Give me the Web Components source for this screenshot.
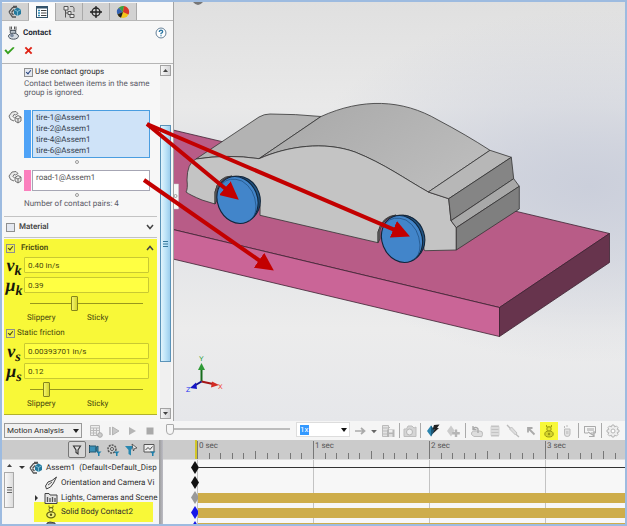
<!DOCTYPE html>
<html lang="en">
<head>
<meta charset="utf-8">
<title>Motion Study</title>
<style>
  html, body { margin: 0; height: 100%; }
  body {
    font: 8px/10px Roboto, "Liberation Sans", sans-serif;
    text-rendering: geometricPrecision;
    color: #2d2d2d;
    --blue: #9dbbe0;
    --highlight: #f8f838;
  }
</style>
</head>
<body>
<motion-app></motion-app>

<script>
const ICONS = {
  assembly: `<path d="M5 1.500H9M1 7 4.500 2.500 9 2M1 7 4.500 12H8M3.500 7.500 6 4.500M3.500 8 5.500 10" fill="none" stroke="#555" stroke-width="1.300"/><path d="M6 4.500 9.500 2.500 13 4.500V9L9.500 11 6 9Z" fill="#25799c"/><path d="M6 4.500 9.500 6.500 13 4.500M9.500 6.500V11" stroke="#9ed3e6" fill="none" stroke-width=".7"/>`,
  list: `<rect x="1.500" y="1.500" width="11" height="11" fill="#fff" stroke="#34536a"/><path d="M1 2.500H13" stroke="#34536a" stroke-width="2"/><path d="M3 5.500H5M3 8H5M3 10.500H5" stroke="#2b87b3" stroke-width="1.300"/><path d="M6 5.500H11.500M6 8H11.500M6 10.500H11.500" stroke="#444"/>`,
  config: `<path d="M2 1.500H6V5H2ZM3.500 5V12.500M3.500 8H6M6 6.500H9V9.500H6ZM8 9.500H12V12.500H8Z" fill="#eee" stroke="#555"/><path d="M8 1.500H11L12 3V7" fill="none" stroke="#666"/>`,
  target: `<circle cx="7" cy="7" r="4" fill="none" stroke="#222" stroke-width="1.300"/><path d="M7 1V13M1 7H13" stroke="#222" stroke-width="1.300"/>`,
  ball: `<circle cx="7" cy="7" r="6" fill="#f3c51c"/><path d="M7 7 3 2.500A6 6 0 0 0 1.500 9.500Z" fill="#3463b5"/><path d="M7 7 3 2.500A6 6 0 0 1 8 1Z" fill="#36a148"/><path d="M7 7 8 1A6 6 0 0 1 12.500 9.500Z" fill="#d8362d"/><path d="M7 7 1.500 9.500A6 6 0 0 0 5 12.700Z" fill="#222"/>`,
  contact: `<path d="M4 .5V4.500H10V.500M5.500 .5V3.500M8.500 .5V3.500" fill="none" stroke="#555"/><ellipse cx="7" cy="6" rx="3" ry="1.800" fill="#bcc4cc" stroke="#4a5560"/><ellipse cx="7.500" cy="10.200" rx="5" ry="3" fill="#d5dbe2" stroke="#4a5560"/><circle cx="6" cy="9.500" r="1.800" fill="#7b8ba0"/>`,
  help: `<circle cx="7" cy="7" r="5.800" fill="#fff" stroke="#4c6c86"/><path d="M5 5.700Q5 3.800 7 3.800T9 5.600Q9 6.500 7 7.500V8.500M7 9.500V10.700" fill="none" stroke="#2d78a4" stroke-width="1.500"/>`,
  ok: `<path d="M.5 7 2.500 5.500 5 8.500 11.500 2.500 13.500 3.500 5 12Z" fill="#35a01c"/>`,
  cancel: `<path d="M3 3 11 11M11 3 3 11" stroke="#df2416" stroke-width="2.400"/>`,
  parts: `<path d="M1 6 4 2 8 1.500 10 3.500 7.500 5 6 4.500 5 6.500 6.500 8M1 6 2.500 9.500 6 11M7 7.500 10 5.500 13 7V11L10 13 7 11ZM7 7.500 10 9 13 7M10 9V13" fill="#e8e8e8" stroke="#666" stroke-width=".9"/>`,
  calc: `<path d="M1.500 1.500H10.500V11.500H1.500ZM1.500 4H10.500M1.500 6.500H10M1.500 9H8M4.500 4V11.500M7.500 4V11.500" fill="#eee" stroke="#bbb"/><circle cx="11" cy="11" r="2.300" fill="#ccc" stroke="#aaa"/>`,
  stepPlay: `<path d="M3 3V11" stroke="#aaa" stroke-width="1.300"/><path d="M5.500 3 12 7 5.500 11Z" fill="#c8c8c8" stroke="#aaa" stroke-width=".8"/>`,
  play: `<path d="M4 3 11 7 4 11Z" fill="#b5b5b5"/>`,
  stop: `<rect x="3.500" y="3.500" width="7" height="7" fill="#a9a9a9"/>`,
  arrowRight: `<path d="M2 7H11M8 4 11.500 7 8 10" fill="none" stroke="#aaa" stroke-width="1.700"/>`,
  caret: `<path d="M3 5.500H11L7 10Z" fill="#666"/>`,
  film: `<path d="M1.500 1.500H7.500V12.500H1.500ZM1.500 4H7M1.500 7H7M1.500 10H7M7.500 3.500H9" fill="#e2e2e2" stroke="#bbb"/><rect x="6" y="5.500" width="7.500" height="7.500" fill="#b5b5b5"/><rect x="8" y="6" width="3.500" height="2.500" fill="#eee"/><rect x="8" y="10" width="3.500" height="3" fill="#ddd"/>`,
  camera: `<path d="M1 5H3.500L5 2H9L11 4 13 3V12.500H1Z" fill="#d5d5d5" stroke="#bdbdbd"/><circle cx="6.500" cy="8" r="3" fill="#eee" stroke="#b5b5b5"/>`,
  keyBlue: `<path d="M1 7 5 1.500 8.500 6.500 5 12.500Z" fill="#2a84ae"/><path d="M5 1.500 8.500 6.500 5 12.500Z" fill="#1b5878"/><path d="M8 1 13.500 .5 11 4H13L6.500 10 8.500 5.500H6.500Z" fill="#222"/>`,
  keyAdd: `<path d="M1 7 5 1.500 8.500 6.500 5 12.500Z" fill="#ccc"/><path d="M10 5.500V13M6.200 9.300H13.800" stroke="#b5b5b5" stroke-width="2.400"/>`,
  motor: `<path d="M1.500 10.500Q1 7 5 7H10Q13 7 12.500 10.500T10 12.500H4T1.500 10.500Z" fill="#ddd" stroke="#bbb"/><path d="M8 9V5Q6 2 3.500 4.500M3 2V5.500H6.500" fill="none" stroke="#aaa" stroke-width="1.400"/>`,
  motorTree: `<path d="M3 2 6 1 11 2V12H3Z" fill="#777" stroke="#444"/>`,
  spring: `<path d="M3 2.500H11M3 5.500H11M3 8.500H11M3 11.500H11" stroke="#c3c3c3" stroke-width="1.800"/><path d="M3 2.500V11.500M11 2.500V11.500" stroke="#d3d3d3"/>`,
  damper: `<path d="M1 1 5 5M8.500 9 13 13" stroke="#bbb" stroke-width="1.400"/><path d="M3.500 5 5.500 3 11 9 9.500 11Z" fill="#ddd" stroke="#c3c3c3"/>`,
  force: `<path d="M10.500 10.500 4 4M4 8.500V4H8.500" fill="none" stroke="#aaa" stroke-width="1.800"/>`,
  contactTool: `<path d="M4.500 1V3H9.500V1" fill="none" stroke="#a7a70c"/><circle cx="7" cy="5" r="2.200" fill="#e5e532" stroke="#9b9a12"/><ellipse cx="7" cy="10" rx="4.200" ry="3" fill="#d5d52b" stroke="#9b9a12"/><circle cx="7" cy="10" r="1.200" fill="#9b9a12"/>`,
  contactTree: `<path d="M5 .5V2.500H9V.500" fill="none" stroke="#77771a"/><circle cx="7" cy="4.700" r="2" fill="#f8f890" stroke="#666615"/><ellipse cx="7" cy="9.800" rx="4.200" ry="3" fill="#f3f37a" stroke="#666615" stroke-width="1.300"/><circle cx="7" cy="9.800" r="1.200" fill="#555511"/>`,
  gravity: `<path d="M4.500 5H10V10Q10 12.500 7.200 12.500T4.500 10ZM4.500 2V4M7 1V3" fill="#e2e2e2" stroke="#bbb"/><path d="M6 7H8.500V10H6Z" fill="#ccc"/>`,
  results: `<path d="M1.500 2V9H5M1.500 2.500H12.500V9H8" fill="none" stroke="#aaa"/><path d="M4 4H11V7H4Z" fill="#ccc"/><path d="M5 8 11.500 12M11 7V12.500H6" fill="none" stroke="#aaa" stroke-width="1.200"/>`,
  gear: `<path d="M6 1H8L8.500 2.800 10.500 2 12 3.500 11.200 5.500 13 6V8L11.200 8.500 12 10.500 10.500 12 8.500 11.200 8 13H6L5.500 11.200 3.500 12 2 10.500 2.800 8.500 1 8V6L2.800 5.500 2 3.500 3.500 2 5.500 2.800Z" fill="#eee" stroke="#b5b5b5"/><circle cx="7" cy="7" r="2" fill="#fff" stroke="#b5b5b5"/>`,
  filter: `<path d="M3.500 3H10.500L8 7V11L6 9.500V7Z" fill="#ddd" stroke="#333" stroke-width="1.100"/>`,
  filterAnim: `<path d="M1.500 2V10" stroke="#333"/><path d="M1.500 3H8V9H1.500ZM8 4.500 10 3V9L8 7.500Z" fill="#3a90b7" stroke="#275a72"/><path d="M8 8.500H13.500L11.500 10.500V13H10V10.500Z" fill="#1d80ac"/>`,
  filterDrive: `<circle cx="6" cy="6" r="4" fill="none" stroke="#555" stroke-width="1.500" stroke-dasharray="2 1"/><circle cx="6" cy="6" r="1.500" fill="#eee" stroke="#555"/><path d="M8 8.500H13.500L11.500 10.500V13H10V10.500Z" fill="#1d80ac"/>`,
  filterSel: `<path d="M1 3H10L7 7V12.500L4.500 11V7Z" fill="#2987b0"/><path d="M8 1 13 5 10.500 5.500 9.500 8Z" fill="#eee" stroke="#444" stroke-width=".8"/>`,
  filterRes: `<path d="M2 1.500H12V9H2Z" fill="#eee" stroke="#555"/><path d="M3.500 7 6 4.500 8 6.500 10.500 3.500" fill="none" stroke="#444"/><path d="M8 8.500H13.500L11.500 10.500V13H10V10.500Z" fill="#1d80ac"/>`,
  view: `<path d="M1.500 10 4 6 8 4.500 12.500 1 9.500 7 6.500 11 2.500 13Z" fill="#eee" stroke="#444"/><path d="M4 9 8 6" stroke="#555"/>`,
  lights: `<path d="M1 2.500H5L6 4H13V12.500H1Z" fill="#e5e5e5" stroke="#444"/><path d="M3.500 6V11M6 7V11M8.500 6V11M11 7V11" stroke="#555" stroke-width="1.300"/>`,
};

class SwIcon extends HTMLElement {
  constructor() {
    super();
    this.attachShadow({ mode: "open" });
  }

  connectedCallback() {
    this.shadowRoot.innerHTML = `
      <style>
        :host { display: inline-block; width: 14px; height: 14px; flex: none; }
        svg { display: block; width: 100%; height: 100%; }
      </style>
      <svg viewBox="0 0 14 14" aria-hidden="true">${ICONS[this.getAttribute("name")] || ""}</svg>
    `;
  }
}
customElements.define("sw-icon", SwIcon);

class CheckOption extends HTMLElement {
  constructor() {
    super();
    this.attachShadow({ mode: "open" });
  }

  connectedCallback() {
    this.shadowRoot.innerHTML = `
      <style>
        :host { display: block; }
        label { display: flex; align-items: center; gap: 2px; }
        input {
          appearance: none;
          flex: none;
          box-sizing: border-box;
          width: 9px;
          height: 9px;
          margin: 0;
          border: 1px solid #8e8f8f;
          background: var(--check-bg, #e4e8f0);
          display: grid;
          place-items: center;
        }
        input:checked::before {
          content: "";
          width: 2px;
          height: 4px;
          margin-bottom: 1px;
          border: solid var(--check-ink, #27447f);
          border-width: 0 1px 1px 0;
          transform: rotate(40deg);
        }
      </style>
      <label><input type="checkbox" ${this.hasAttribute("checked") ? "checked" : ""}><slot></slot></label>
    `;
  }
}
customElements.define("check-option", CheckOption);

class SelectionBox extends HTMLElement {
  constructor() {
    super();
    this.attachShadow({ mode: "open" });
  }

  connectedCallback() {
    this.shadowRoot.innerHTML = `
      <style>
        :host { display: block; }
        .row { display: flex; align-items: stretch; }
        sw-icon { margin: 0 2px 0 4px; }
        .swatch { width: 7px; margin-right: 1px; background: var(--swatch); }
        ul {
          flex: 1;
          box-sizing: border-box;
          margin: 0;
          padding: 1px 3px;
          list-style: none;
          min-height: 21px;
          line-height: 11px;
          border: 1px solid var(--edge, #a6a6b4);
          background: var(--fill, #fff);
        }
        .grip {
          width: 2px;
          height: 2px;
          margin: 2px auto 0;
          border: 1px solid #999;
          border-radius: 50%;
        }
      </style>
      <div class="row">
        <sw-icon name="parts"></sw-icon>
        <span class="swatch"></span>
        <ul><slot></slot></ul>
      </div>
      <div class="grip"></div>
    `;
  }
}
customElements.define("selection-box", SelectionBox);

class ValueField extends HTMLElement {
  constructor() {
    super();
    this.attachShadow({ mode: "open" });
  }

  connectedCallback() {
    this.shadowRoot.innerHTML = `
      <style>
        :host { display: flex; align-items: center; height: 16px; }
        label {
          width: 20px;
          flex: none;
          text-align: center;
          white-space: nowrap;
          font: italic bold 18px/12px "Liberation Serif", serif;
          color: #16160a;
        }
        sub { font-size: 14px; line-height: 0; vertical-align: -4px; }
        input {
          flex: 1;
          min-width: 0;
          box-sizing: border-box;
          height: 16px;
          padding: 0 3px;
          border: 1px solid #c9c932;
          border-radius: 1px;
          background: #ffff42;
          font: inherit;
          color: #47470e;
        }
      </style>
      <label for="value">${this.getAttribute("symbol")}<sub>${this.getAttribute("sub")}</sub></label>
      <input id="value" type="text" value="${this.getAttribute("value")}">
    `;
  }
}
customElements.define("value-field", ValueField);

class GripSlider extends HTMLElement {
  constructor() {
    super();
    this.attachShadow({ mode: "open" });
  }

  connectedCallback() {
    this.shadowRoot.innerHTML = `
      <style>
        :host { display: block; padding: 3px 14px 0 26px; }
        input {
          appearance: none;
          display: block;
          width: 100%;
          height: 15px;
          margin: 0;
          background: linear-gradient(#98981d, #98981d) center / 100% 1px no-repeat;
        }
        input::-webkit-slider-thumb {
          appearance: none;
          box-sizing: border-box;
          width: 7px;
          height: 15px;
          border: 1px solid #85851c;
          border-radius: 1px;
          background: linear-gradient(90deg, #f4f46a, #d6d62e);
        }
        .ends { display: grid; grid-template-columns: 60px 1fr; margin: 2px 0 0 -3px; }
      </style>
      <input type="range" min="0" max="100" value="${this.getAttribute("value")}" aria-label="${this.getAttribute("label")}">
      <div class="ends"><span>Slippery</span><span>Sticky</span></div>
    `;
  }
}
customElements.define("grip-slider", GripSlider);

class PanelScroll extends HTMLElement {
  constructor() {
    super();
    this.attachShadow({ mode: "open" });
  }

  connectedCallback() {
    this.shadowRoot.innerHTML = `
      <style>
        :host { display: flex; flex-direction: column; width: 11px; background: #f0f0f0; }
        button {
          box-sizing: border-box;
          height: 11px;
          padding: 0;
          border: 1px solid #a3a3a3;
          background: linear-gradient(90deg, #f6f6f6, #d4d4d6);
          display: grid;
          place-items: center;
        }
        .rail { flex: 1; padding: 49px 0 46px; display: flex; }
        .thumb {
          flex: 1;
          border: 1px solid #5b93b8;
          background: linear-gradient(90deg, #e2f4fc, #bfe4f8 50%, #9ccdec);
          display: grid;
          place-items: center;
        }
      </style>
      <button aria-label="Scroll up"><svg width="5" height="3"><path d="M0 3 2.500 0 5 3Z" fill="#444"/></svg></button>
      <div class="rail"><div class="thumb"><svg width="5" height="6"><path d="M0 .5H5M0 3H5M0 5.500H5" stroke="#35789d"/></svg></div></div>
      <button aria-label="Scroll down"><svg width="5" height="3"><path d="M0 0 2.500 3 5 0Z" fill="#444"/></svg></button>
    `;
  }
}
customElements.define("panel-scroll", PanelScroll);

class PropertyPanel extends HTMLElement {
  constructor() {
    super();
    this.attachShadow({ mode: "open" });
  }

  connectedCallback() {
    this.shadowRoot.innerHTML = `
      <style>
        :host { display: flex; flex-direction: column; background: #f7f7f7; }
        button { padding: 0; border: 0; background: none; display: grid; place-items: center; }
        nav { display: flex; height: 17px; padding-top: 1px; border-bottom: 1px solid #b7b7b7; }
        nav button { width: 27px; border-right: 1px solid #a9a9a9; background: #d2d2d2; }
        nav button.active { background: #fbfbfb; margin-bottom: -1px; }
        header { display: flex; align-items: center; gap: 3px; padding: 5px 6px 0 4px; }
        h1 { flex: 1; margin: 0; font-size: 8px; line-height: 12px; color: #262a35; }
        header button sw-icon { width: 12px; height: 12px; }
        .actions { display: flex; gap: 8px; padding: 5px 3px 7px 2px; border-bottom: 1px solid #b5b5b5; }
        .actions sw-icon { width: 11px; height: 11px; }
        .content { flex: 1; display: flex; }
        .page { flex: 1; min-width: 0; padding: 3px 2px 6px 2px; }
        .groups { padding: 0 0 0 20px; }
        p { margin: 2px 0 0; line-height: 9px; color: #5a5a66; }
        selection-box { margin: 13px 8px 0 0; }
        .tires { --swatch: #4fa3f7; --edge: #4a9de0; --fill: #cfe3f8; color: #333c4c; }
        .road { --swatch: #fb7fbd; margin-top: 6px; color: #555; }
        .count { margin: 2px 0 7px 20px; line-height: 10px; }
        .bar {
          display: flex;
          justify-content: space-between;
          align-items: center;
          padding: 0 3px 0 2px;
        }
        .bar svg { fill: none; stroke: #444; stroke-width: 1.500; }
        .material {
          height: 20px;
          margin-right: 1px;
          border: solid #c3c3c3;
          border-width: 1px 0;
          font-weight: 600;
          color: #484848;
        }
        .material .name { padding-left: 2px; }
        .friction {
          margin: 1px 1px 0 0;
          padding: 4px 0 5px;
          background: var(--highlight);
          border-bottom: 1px solid #b1b12c;
          color: #47470e;
          --check-bg: #f2f24a;
          --check-ink: #44440a;
        }
        .friction .bar { padding-right: 3px; margin-bottom: 4px; }
        .friction .name { font-weight: 600; padding-left: 4px; }
        .fields { padding-right: 8px; display: grid; gap: 4px; }
        .static { margin: 5px 0 5px 2px; }
        .static + .fields { color: #3d3d0e; }
        panel-scroll { margin: 1px 2px 2px 0; }
      </style>
      <nav aria-label="Manager tabs">
        <button aria-label="Feature tree"><sw-icon name="assembly"></sw-icon></button>
        <button class="active" aria-label="Properties"><sw-icon name="list"></sw-icon></button>
        <button aria-label="Configurations"><sw-icon name="config"></sw-icon></button>
        <button aria-label="Dimensions"><sw-icon name="target"></sw-icon></button>
        <button aria-label="Display"><sw-icon name="ball"></sw-icon></button>
      </nav>
      <header>
        <sw-icon name="contact"></sw-icon>
        <h1>Contact</h1>
        <button aria-label="Help"><sw-icon name="help"></sw-icon></button>
      </header>
      <div class="actions">
        <button aria-label="OK"><sw-icon name="ok"></sw-icon></button>
        <button aria-label="Cancel"><sw-icon name="cancel"></sw-icon></button>
      </div>
      <div class="content">
        <div class="page">
          <div class="groups">
            <check-option checked>Use contact groups</check-option>
            <p>Contact between items in the same group is ignored.</p>
          </div>
          <selection-box class="tires">
            <li>tire-1@Assem1</li><li>tire-2@Assem1</li><li>tire-4@Assem1</li><li>tire-6@Assem1</li>
          </selection-box>
          <selection-box class="road"><li>road-1@Assem1</li></selection-box>
          <p class="count">Number of contact pairs: 4</p>
          <div class="bar material">
            <check-option><span class="name">Material</span></check-option>
            <svg width="8" height="6"><path d="M1 1 4 4.500 7 1"/></svg>
          </div>
          <section class="friction">
            <div class="bar">
              <check-option checked><span class="name">Friction</span></check-option>
              <svg width="8" height="6"><path d="M1 5 4 1.500 7 5"/></svg>
            </div>
            <div class="fields">
              <value-field symbol="v" sub="k" value="0.40 in/s"></value-field>
              <value-field symbol="μ" sub="k" value="0.39"></value-field>
            </div>
            <grip-slider value="39" label="Friction"></grip-slider>
            <check-option class="static" checked>Static friction</check-option>
            <div class="fields">
              <value-field symbol="v" sub="s" value="0.00393701 in/s"></value-field>
              <value-field symbol="μ" sub="s" value="0.12"></value-field>
            </div>
            <grip-slider value="12" label="Static friction"></grip-slider>
          </section>
        </div>
        <panel-scroll></panel-scroll>
      </div>
    `;
  }
}
customElements.define("property-panel", PropertyPanel);

class ModelView extends HTMLElement {
  constructor() {
    super();
    this.attachShadow({ mode: "open" });
  }

  connectedCallback() {
    this.shadowRoot.innerHTML = `
      <style>
        :host {
          display: block;
          overflow: hidden;
          background:
            radial-gradient(ellipse 65% 42% at 92% 44%, #cbcfdb, #cbcfdb00),
            linear-gradient(#e0e0e0, #e9e9e9 25%, #dcdee3 42%, #ececec 78%, #e6e7ea);
        }
        svg { display: block; width: 100%; height: 100%; }
        text { font: 7px "Liberation Sans", sans-serif; stroke: none; }
      </style>
      <svg role="img" aria-label="Car on a road block">
        <defs>
          <linearGradient id="roof" x1="0" y1="0" x2="1" y2=".6">
            <stop offset="0" stop-color="#a7a7a7"/><stop offset="1" stop-color="#bcbcbc"/>
          </linearGradient>
        </defs>
        <g transform="translate(-174 -2)" stroke-linejoin="round">
          <path d="M193 2Q198 8 203 2Z" fill="#777"/>
          <g stroke="#3c2231" stroke-width=".8">
            <path d="M173 130 609.500 233.500 499.500 307.500 173 229.500Z" fill="#b85c87"/>
            <path d="M173 229.500 499.500 307.500V336.500L173 259Z" fill="#ca6597"/>
            <path d="M499.500 307.500 609.500 233.500V262.500L499.500 336.500Z" fill="#67344d"/>
          </g>
          <g stroke="#333" stroke-width=".8">
            <path d="M196 159 259 117Q264 114 270 114Q296 114 321 116.500L259 158.700Q228 154 196 159Z" fill="#b3b3b3"/>
            <path d="M321 116.500C362 98 402 99 438 120C457 130 474 140 490 150.300L428.300 192C405 179 385 164 355 152C324 141 288 146 259 158.700Z" fill="url(#roof)"/>
            <path d="M196 159Q228 154 259 158.700C288 146 324 141 355 152C385 164 405 179 428.300 192L448.700 198.700 451 220.700 456.300 227.700V250L425 250.700 424 250Q424 214 400 215Q382 216 378 232V242.700L260 215.300Q262 178 236 176Q218 176 215 192V204L202 200Q190 195 186 192Q188 189 187 180Q187 163 196 159Z" fill="#c4c4c4"/>
            <path d="M490 150.300 511.300 157.300 448.700 198.700 428.300 192Z" fill="#b7b7b7"/>
            <path d="M511.300 157.300 513.700 178.700 451 220.700 448.700 198.700Z" fill="#858585"/>
            <path d="M513.700 178.700 519.300 186.300 456.300 227.700 451 220.700Z" fill="#a8a8a8"/>
            <path d="M519.300 186.300V209L456.300 250V227.700Z" fill="#7f7f7f"/>
            <path d="M215 204 217 200V190Q220 178 232 176Q218 176 215 192ZM378 242.700 380 239V230Q384 217 396 215Q382 216 378 232Z" fill="#6c6c6c"/>
          </g>
          <g stroke="#10253b" stroke-width="1.100">
            <ellipse cx="240" cy="199" rx="20" ry="23" transform="rotate(-18 240 199)" fill="#235684"/>
            <ellipse cx="237.500" cy="200" rx="20" ry="24" transform="rotate(-22 237.500 200)" fill="#4285ca"/>
            <ellipse cx="404.500" cy="238" rx="20" ry="23" transform="rotate(-18 404.500 238)" fill="#235684"/>
            <ellipse cx="402" cy="239" rx="20" ry="24" transform="rotate(-22 402 239)" fill="#4285ca"/>
          </g>
          <g fill="none" stroke="#1d4c7c" stroke-width=".7">
            <path d="M222 184Q229 176 242 181Q255 189 256 206Q256 217 249 221M386 223Q393 215 406 220Q419 228 420 245Q420 256 413 260"/>
          </g>
          <path d="M201.500 381.500V368" stroke="#176c1d" stroke-width="2"/>
          <path d="M198 370 201.500 363 205 370Z" fill="#2f9a37"/>
          <path d="M201.500 381.500 213 384" stroke="#a51616" stroke-width="2"/>
          <path d="M212 381.500 219 385 211 387.500Z" fill="#d32c24"/>
          <path d="M201.500 381.500 194 386" stroke="#15158a" stroke-width="2"/>
          <path d="M196 382.500 190 388 197 389Z" fill="#1515c6"/>
          <text x="199" y="361" fill="#249a2c">Y</text>
          <text x="218" y="389" fill="#f03c32">X</text>
          <text x="186" y="392" fill="#2030f0">Z</text>
          <path d="M173 184H178.500V209H173Z" fill="#f6f6f6" stroke="#ccc" stroke-width=".5"/>
          <circle cx="175.500" cy="196" r="1.500" fill="none" stroke="#888" stroke-width=".8"/>
        </g>
      </svg>
    `;
  }
}
customElements.define("model-view", ModelView);

class TreeItem extends HTMLElement {
  constructor() {
    super();
    this.attachShadow({ mode: "open" });
  }

  connectedCallback() {
    const fold = this.getAttribute("fold");
    const paths = { open: "M1 2H7L4 5Z", closed: "M2 1 5 4 2 7Z" };
    this.shadowRoot.innerHTML = `
      <style>
        :host { display: flex; align-items: center; gap: 3px; height: 15px; white-space: nowrap; }
        :host([level="2"]) { padding-left: 15px; }
        :host([marked]) {
          width: 135px;
          height: 20px;
          margin: -3px 0 -2px;
          padding: 0;
          background: linear-gradient(90deg, transparent 16px, var(--highlight) 16px);
        }
        :host([marked]) .fold { margin-left: 15px; }
        .fold { width: 8px; height: 8px; flex: none; }
      </style>
      <svg class="fold" viewBox="0 0 8 8"><path d="${paths[fold] || ""}" fill="#333"/></svg>
      <sw-icon name="${this.getAttribute("icon")}"></sw-icon>
      <span><slot></slot></span>
    `;
  }
}
customElements.define("tree-item", TreeItem);

class TimeLine extends HTMLElement {
  constructor() {
    super();
    this.attachShadow({ mode: "open" });
  }

  connectedCallback() {
    const ticks = Array.from({ length: 9 }, (_, i) => {
      const x = Math.round((i + 1) * 11.6) + 0.5;
      return `M${x} ${i === 4 ? 11 : 13}V19`;
    }).join("");
    const seconds = Array.from({ length: 4 }, (_, i) => `
      <div class="second">
        <span>${i} sec</span>
        <svg width="116" height="19"><path d="M.5 1V19${ticks}" stroke="#777"/></svg>
      </div>`).join("");
    const rows = ["line #111", "blank #111", "bar #999", "bar #1717e8", "bar #1717e8"].map((row) => {
      const [kind, color] = row.split(" ");
      return `<div class="row"><svg width="8" height="13"><path d="M0 6.500 4 0 8 6.500 4 13Z" fill="${color}"/></svg><i class="${kind}"></i></div>`;
    }).join("");
    this.shadowRoot.innerHTML = `
      <style>
        :host { display: block; min-width: 0; overflow: hidden; background: #f7f7f7; }
        .ruler {
          display: flex;
          height: 20px;
          box-sizing: border-box;
          padding-left: 34px;
          background: #cbcbcb;
          border-bottom: 1px solid #dedede;
        }
        .second { flex: none; width: 116px; display: grid; color: #555; }
        .second > * { grid-area: 1 / 1; display: block; }
        .second span { padding: 1px 0 0 2px; }
        .second:first-child { border-left: 2px solid #d2c628; margin-left: -2px; }
        .tracks {
          background: repeating-linear-gradient(90deg, #c3c3c3 0 1px, transparent 1px 116px) 34px 0 no-repeat;
        }
        .row { display: flex; align-items: center; height: 15px; padding-left: 28px; }
        .row svg { flex: none; margin-right: -1px; }
        i { flex: 1; }
        .line { height: 1px; background: #333; }
        .bar { height: 10px; background: #cead4a; }
      </style>
      <div class="ruler">${seconds}</div>
      <div class="tracks">${rows}</div>
    `;
  }
}
customElements.define("time-line", TimeLine);

class MotionStudy extends HTMLElement {
  constructor() {
    super();
    this.attachShadow({ mode: "open" });
  }

  connectedCallback() {
    const tool = (name, label) => `<button aria-label="${label}"><sw-icon name="${name}"></sw-icon></button>`;
    this.shadowRoot.innerHTML = `
      <style>
        :host { display: flex; flex-direction: column; overflow: hidden; background: #f5f5f5; }
        button {
          flex: none;
          width: 18px;
          height: 18px;
          padding: 0;
          border: 0;
          background: none;
          display: grid;
          place-items: center;
        }
        .toolbar { display: flex; align-items: center; height: 19px; padding-left: 2px; }
        .study { display: flex; align-items: center; margin-right: 5px; }
        select {
          appearance: none;
          box-sizing: border-box;
          width: 78px;
          height: 15px;
          margin: 0;
          padding: 0 2px;
          border: 1px solid #999;
          border-radius: 0;
          background: #f0f0f0;
          font: inherit;
          color: inherit;
        }
        .study svg { margin-left: -9px; margin-right: 3px; pointer-events: none; }
        .position {
          appearance: none;
          flex: none;
          width: 124px;
          height: 15px;
          margin: 0 6px 3px 7px;
          background: linear-gradient(#bdbdbd, #bdbdbd) center / 100% 2px no-repeat;
        }
        .position::-webkit-slider-thumb {
          appearance: none;
          box-sizing: border-box;
          width: 8px;
          height: 11px;
          border: 1px solid #aaa;
          border-radius: 1px 1px 4px 4px;
          background: #f6f6f6;
        }
        .speed {
          flex: none;
          display: flex;
          justify-content: space-between;
          align-items: center;
          box-sizing: border-box;
          width: 54px;
          height: 15px;
          margin: 0 1px 2px 0;
          padding: 0 2px 0 3px;
          border: 1px solid #ddd;
          background: #fff;
        }
        .speed input {
          width: 9px;
          height: 10px;
          box-sizing: border-box;
          padding: 0;
          border: 0;
          background: #3399ff;
          color: #fff;
          font: inherit;
        }
        .speed button { width: 6px; height: 10px; }
        .sep { flex: none; width: 1px; height: 15px; margin: 0 2px; background: #aaa; }
        .narrow { width: 10px; }
        .narrow sw-icon { width: 10px; }
        .camera { width: 16px; }
        .key { width: 20px; }
        .active { background: var(--highlight); }
        .body { flex: 1; display: grid; grid-template-columns: 157px 4px 1fr; min-height: 0; }
        .tree { overflow: hidden; min-width: 0; }
        .split { background: linear-gradient(90deg, #9a9a9a, #bcbcc4); }
        .filters {
          box-sizing: border-box;
          height: 20px;
          display: flex;
          justify-content: flex-end;
          align-items: center;
          padding-right: 1px;
          background: #cbcbcb;
          border-bottom: 1px solid #dedede;
        }
        .filters .on { box-sizing: border-box; height: 17px; border: 1px solid #777; border-radius: 2px; background: #d6d6d6; }
        .items { display: flex; }
        .scroll { flex: none; width: 10px; margin: 4px 4px 0 2px; display: grid; justify-items: center; align-content: start; gap: 5px; }
        .thumb {
          box-sizing: border-box;
          width: 10px;
          height: 36px;
          border: 1px solid #aaa;
          background: linear-gradient(90deg, #f8f8f8, #ddd);
          display: grid;
          place-items: center;
        }
      </style>
      <div class="toolbar">
        <label class="study">
          <select aria-label="Study type"><option>Motion Analysis</option></select>
          <svg width="6" height="4"><path d="M0 0H6L3 4Z" fill="#222"/></svg>
        </label>
        ${tool("calc", "Calculate")}
        ${tool("stepPlay", "Play from start")}
        ${tool("play", "Play")}
        ${tool("stop", "Stop")}
        <input class="position" type="range" value="0" aria-label="Time position">
        <div class="speed">
          <input type="text" value="1x" aria-label="Playback speed">
          <button aria-label="Speeds"><svg width="6" height="4"><path d="M0 0H6L3 4Z" fill="#111"/></svg></button>
        </div>
        ${tool("arrowRight", "Playback mode")}
        <button class="narrow" aria-label="Playback modes"><sw-icon name="caret"></sw-icon></button>
        ${tool("film", "Save animation")}
        <span class="sep"></span>
        <button class="camera" aria-label="Animation wizard"><sw-icon name="camera"></sw-icon></button>
        <span class="sep"></span>
        <button class="key" aria-label="Autokey"><sw-icon name="keyBlue"></sw-icon></button>
        <button class="key" aria-label="Add key"><sw-icon name="keyAdd"></sw-icon></button>
        <span class="sep"></span>
        ${tool("motor", "Motor")}
        ${tool("spring", "Spring")}
        ${tool("damper", "Damper")}
        ${tool("force", "Force")}
        <button class="active" aria-label="Contact"><sw-icon name="contactTool"></sw-icon></button>
        ${tool("gravity", "Gravity")}
        <span class="sep"></span>
        ${tool("results", "Results and plots")}
        <span class="sep"></span>
        ${tool("gear", "Study properties")}
      </div>
      <div class="body">
        <div class="tree">
          <div class="filters">
            <button class="on" aria-label="No filter"><sw-icon name="filter"></sw-icon></button>
            ${tool("filterAnim", "Filter animated")}
            ${tool("filterDrive", "Filter driving")}
            ${tool("filterSel", "Filter selected")}
            ${tool("filterRes", "Filter results")}
          </div>
          <div class="items">
            <div class="scroll">
              <svg width="5" height="3"><path d="M0 3 2.500 0 5 3Z" fill="#444"/></svg>
              <div class="thumb"><svg width="5" height="6"><path d="M0 .5H5M0 3H5M0 5.500H5" stroke="#666"/></svg></div>
            </div>
            <div>
              <tree-item fold="open" icon="assembly">Assem1&nbsp; (Default&lt;Default_Disp</tree-item>
              <tree-item level="2" icon="view">Orientation and Camera Vi</tree-item>
              <tree-item level="2" fold="closed" icon="lights">Lights, Cameras and Scene</tree-item>
              <tree-item marked icon="contactTree">Solid Body Contact2</tree-item>
              <tree-item level="2" icon="motorTree"></tree-item>
            </div>
          </div>
        </div>
        <div class="split"></div>
        <time-line></time-line>
      </div>
    `;
  }
}
customElements.define("motion-study", MotionStudy);

class CalloutArrows extends HTMLElement {
  constructor() {
    super();
    this.attachShadow({ mode: "open" });
  }

  connectedCallback() {
    this.shadowRoot.innerHTML = `
      <style>
        :host { display: block; position: absolute; inset: 0; pointer-events: none; }
        svg { display: block; width: 100%; height: 100%; }
      </style>
      <svg aria-hidden="true">
        <defs>
          <marker id="head" markerUnits="userSpaceOnUse" markerWidth="18" markerHeight="18" refX="17" refY="9" orient="auto">
            <path d="M0 0 18 9 0 18Z" fill="#c30000"/>
          </marker>
        </defs>
        <g stroke="#c30000" stroke-width="4">
          <path d="M145 122 236 197" marker-end="url(#head)" stroke-dasharray="108 30"/>
          <path d="M145 122 407 234" marker-end="url(#head)" stroke-dasharray="275 30"/>
          <path d="M142 178 271 268" marker-end="url(#head)" stroke-dasharray="146 30"/>
        </g>
      </svg>
    `;
  }
}
customElements.define("callout-arrows", CalloutArrows);

class MotionApp extends HTMLElement {
  constructor() {
    super();
    this.attachShadow({ mode: "open" });
  }

  connectedCallback() {
    this.shadowRoot.innerHTML = `
      <style>
        :host {
          box-sizing: border-box;
          display: grid;
          grid-template-rows: auto minmax(0, 1fr);
          height: 100vh;
          overflow: hidden;
          position: relative;
          border: 2px solid var(--blue);
        }
        .work { display: grid; grid-template-columns: 171px 1px minmax(0, 1fr); }
        .edge { background: #a4a4a4; }
      </style>
      <div class="work">
        <property-panel></property-panel>
        <div class="edge"></div>
        <model-view></model-view>
      </div>
      <motion-study></motion-study>
      <callout-arrows></callout-arrows>
    `;
  }
}
customElements.define("motion-app", MotionApp);
</script>
</body>
</html>
